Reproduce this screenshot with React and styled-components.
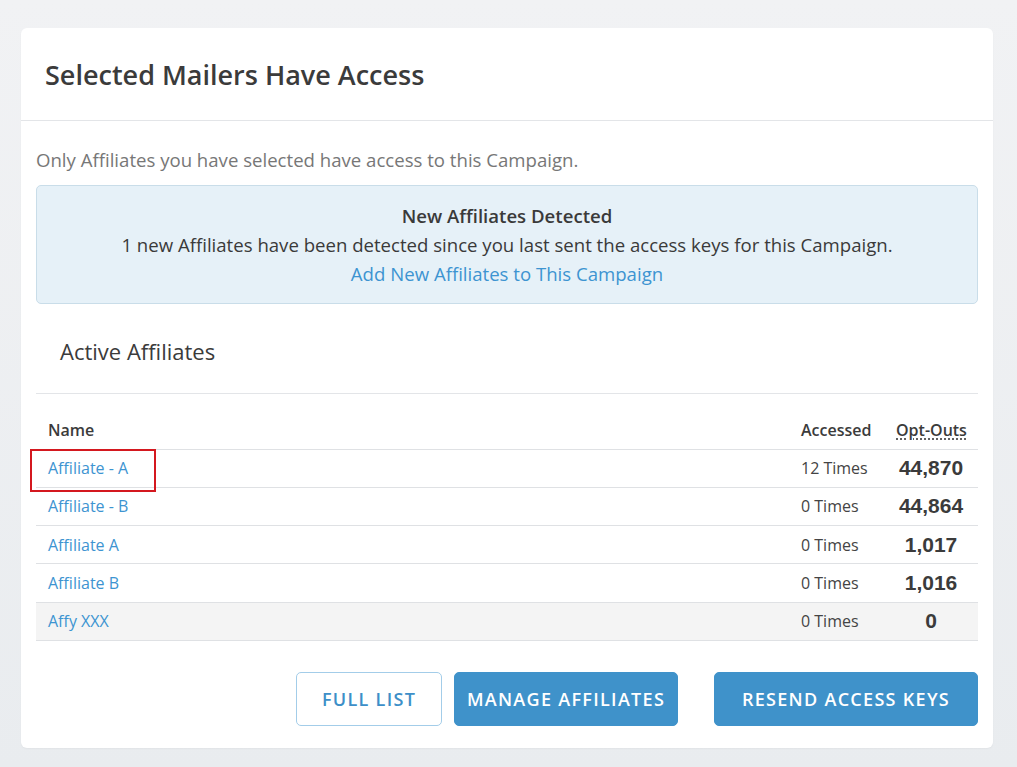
import React from "react";
import styled, { createGlobalStyle } from "styled-components";

const Global = createGlobalStyle`
  html, body { margin: 0; padding: 0; }
  body {
    background: linear-gradient(180deg, #f1f2f4 0%, #e9ecef 100%);
    min-height: 767px;
    font-family: "Open Sans", Lato, sans-serif;
    color: #333;
  }
`;

const Page = styled.div`
  padding: 28px 24px 20px 21px;
`;

const Card = styled.section`
  width: 972px;
  background: #fff;
  border-radius: 6px;
  box-shadow: 0 1px 2px rgba(0,0,0,0.04);
`;

const Header = styled.header`
  height: 92px;
  border-bottom: 1px solid #e3e5e8;
  display: flex;
  align-items: center;
  padding: 0 24px;
`;

const Title = styled.h1`
  margin: 0;
  font-size: 27px;
  font-weight: 600;
  color: #3b3b3b;
`;

const Body = styled.div`
  padding: 26px 15px 22px 15px;
`;

const Intro = styled.p`
  margin: 0 0 12px;
  font-size: 18.6px;
  line-height: 26px;
  color: #777;
`;

const Alert = styled.div`
  background: #e6f1f8;
  border: 1px solid #c9dde9;
  border-radius: 5px;
  padding: 15px 15px;
  text-align: center;
  font-size: 18.6px;
  line-height: 29px;
  color: #3a3a3a;
`;

const AlertTitle = styled.div`
  font-weight: 600;
`;

const Link = styled.a`
  color: #3d94d1;
  text-decoration: none;
  cursor: pointer;
`;

const SectionTitle = styled.h2`
  margin: 0;
  padding: 32px 24px 0;
  box-sizing: border-box;
  height: 90px;
  font-size: 22px;
  font-weight: 400;
  line-height: 30px;
  color: #3b3b3b;
  border-bottom: 1px solid #e3e5e8;
`;

const Table = styled.table`
  width: 100%;
  table-layout: fixed;
  border-collapse: collapse;
  margin-top: 20px;
`;

const Th = styled.th`
  box-sizing: border-box;
  text-align: ${(p) => p.$align || "left"};
  font-size: 16px;
  font-weight: 600;
  color: #3b3b3b;
  padding: 0 12px 8px;
  height: 35px;
  vertical-align: bottom;
  border-bottom: 1px solid #dfe1e4;
  width: ${(p) => p.$w || "auto"};
  white-space: nowrap;
`;

const Abbr = styled.abbr`
  text-decoration: underline dotted;
  text-underline-offset: 3px;
  cursor: help;
`;

const Tr = styled.tr`
  background: ${(p) => (p.$shaded ? "#f4f4f4" : "transparent")};
`;

const Td = styled.td`
  height: 37.3px;
  padding: 0 12px;
  border-bottom: 1px solid #dfe1e4;
  font-size: 16px;
  color: #444;
  text-align: ${(p) => p.$align || "left"};
  position: relative;
  white-space: nowrap;
`;

const NameLink = styled(Link)`
  font-size: 16px;
`;

const Highlight = styled.span`
  position: absolute;
  left: -6px;
  top: -1px;
  width: 122px;
  height: 39px;
  border: 2px solid #d4181f;
  pointer-events: none;
`;

const Count = styled.span`
  font-family: "Liberation Sans", Arial, sans-serif;
  font-weight: 700;
  font-size: 21px;
  color: #3b3b3b;
`;

const Actions = styled.div`
  display: flex;
  justify-content: flex-end;
  align-items: center;
  margin-top: 31px;
`;

const Button = styled.button`
  height: 54px;
  padding: 0;
  margin-left: ${(p) => p.$gap || 0}px;
  border-radius: 5px;
  font-family: "Open Sans", Lato, sans-serif;
  font-size: 18px;
  font-weight: 600;
  letter-spacing: 1.3px;
  text-transform: uppercase;
  white-space: nowrap;
  cursor: pointer;
  border: 1px solid ${(p) => (p.$outline ? "#a3cde9" : "#3f92ca")};
  background: ${(p) => (p.$outline ? "#fff" : "#3f92ca")};
  color: ${(p) => (p.$outline ? "#3d8fc8" : "#fff")};
  width: ${(p) => p.$w}px;
`;

const rows = [
  { name: "Affiliate - A", accessed: "12 Times", opt: "44,870", highlight: true },
  { name: "Affiliate - B", accessed: "0 Times", opt: "44,864" },
  { name: "Affiliate A", accessed: "0 Times", opt: "1,017" },
  { name: "Affiliate B", accessed: "0 Times", opt: "1,016" },
  { name: "Affy XXX", accessed: "0 Times", opt: "0", shaded: true },
];

export default function App() {
  return (
    <Page>
      <Global />
      <Card>
        <Header>
          <Title>Selected Mailers Have Access</Title>
        </Header>
        <Body>
          <Intro>Only Affiliates you have selected have access to this Campaign.</Intro>
          <Alert>
            <AlertTitle>New Affiliates Detected</AlertTitle>
            <div>1 new Affiliates have been detected since you last sent the access keys for this Campaign.</div>
            <Link>Add New Affiliates to This Campaign</Link>
          </Alert>
          <SectionTitle>Active Affiliates</SectionTitle>
          <Table>
            <thead>
              <tr>
                <Th>Name</Th>
                <Th $w="95px">Accessed</Th>
                <Th $w="94px" $align="center">
                  <Abbr title="Opt-Outs">Opt-Outs</Abbr>
                </Th>
              </tr>
            </thead>
            <tbody>
              {rows.map((r) => (
                <Tr key={r.name} $shaded={r.shaded}>
                  <Td>
                    <NameLink>{r.name}</NameLink>
                    {r.highlight && <Highlight />}
                  </Td>
                  <Td>{r.accessed}</Td>
                  <Td $align="center">
                    <Count>{r.opt}</Count>
                  </Td>
                </Tr>
              ))}
            </tbody>
          </Table>
          <Actions>
            <Button $outline $w={146}>Full List</Button>
            <Button $gap={12} $w={224}>Manage Affiliates</Button>
            <Button $gap={36} $w={264}>Resend Access Keys</Button>
          </Actions>
        </Body>
      </Card>
    </Page>
  );
}
